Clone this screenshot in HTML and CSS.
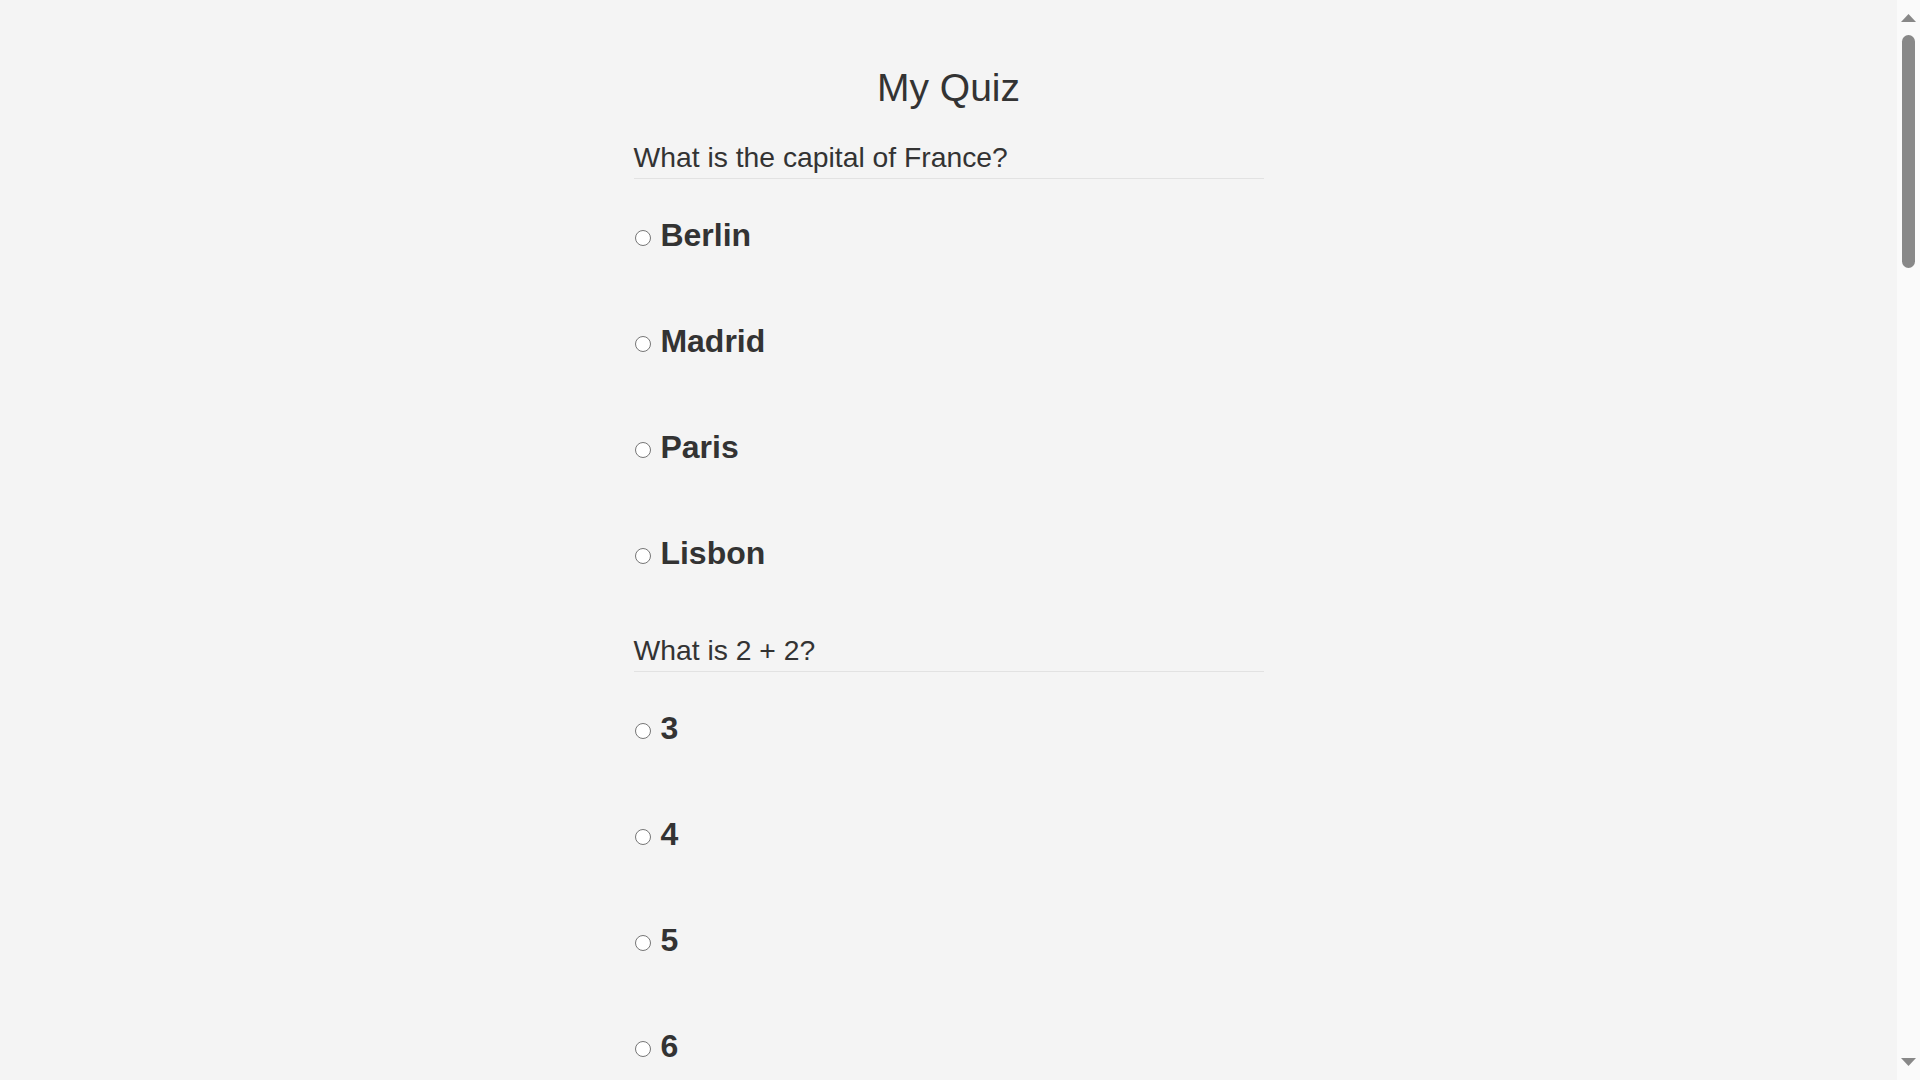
FILE: index.html
```html
<!DOCTYPE html>
<html lang="en">
<head>
<meta charset="utf-8">
<title>My Quiz</title>
<link rel="stylesheet" href="styles.css">
</head>
<body>
<div class="page">
  <main class="quiz">
    <h1 class="quiz-title">My Quiz</h1>

    <section class="question">
      <h2 class="question-text">What is the capital of France?</h2>
      <div class="options">
        <label class="option"><input type="radio" name="q1" class="radio"> Berlin</label>
        <label class="option"><input type="radio" name="q1" class="radio"> Madrid</label>
        <label class="option"><input type="radio" name="q1" class="radio"> Paris</label>
        <label class="option"><input type="radio" name="q1" class="radio"> Lisbon</label>
      </div>
    </section>

    <section class="question">
      <h2 class="question-text">What is 2 + 2?</h2>
      <div class="options">
        <label class="option"><input type="radio" name="q2" class="radio"> 3</label>
        <label class="option"><input type="radio" name="q2" class="radio"> 4</label>
        <label class="option"><input type="radio" name="q2" class="radio"> 5</label>
        <label class="option"><input type="radio" name="q2" class="radio"> 6</label>
      </div>
    </section>
  </main>
</div>
<div class="scrollbar" aria-hidden="true">
  <svg class="scroll-arrow" width="23" height="30" viewBox="0 0 23 30"><polygon points="4,22 11.5,14 19,22" fill="#888888"/></svg>
  <div class="scroll-thumb"></div>
  <svg class="scroll-arrow scroll-arrow-down" width="23" height="30" viewBox="0 0 23 30"><polygon points="4,8 19,8 11.5,16" fill="#888888"/></svg>
</div>
</body>
</html>
```

FILE: styles.css
```css
html, body {
  margin: 0;
  padding: 0;
}

body {
  display: flex;
  height: 100vh;
  overflow: hidden;
  background: #f4f4f4;
  color: #333333;
  font-family: "Liberation Sans", Arial, sans-serif;
}

.page {
  flex: 1;
  min-width: 0;
}

.quiz {
  width: 630px;
  margin: 0 auto;
  padding-top: 65px;
}

.quiz-title {
  margin: 0 0 30px;
  font-size: 39px;
  line-height: 46px;
  font-weight: normal;
  text-align: center;
}

.question + .question {
  margin-top: 62px;
}

.question-text {
  margin: 0;
  font-size: 28.3px;
  line-height: 32px;
  font-weight: normal;
  padding-bottom: 5px;
  border-bottom: 1px solid #e2e2e2;
}

.options {
  margin-top: 38px;
  display: flex;
  flex-direction: column;
  gap: 69px;
}

.option {
  display: block;
  font-size: 32px;
  line-height: 37px;
  font-weight: bold;
  white-space: pre;
}

.radio {
  -webkit-appearance: none;
  appearance: none;
  box-sizing: border-box;
  width: 16px;
  height: 16px;
  margin: 0 1px 0 1px;
  border: 1.5px solid #767676;
  border-radius: 50%;
  background: #ffffff;
  vertical-align: baseline;
}

/* scrollbar */
.scrollbar {
  width: 23px;
  flex: none;
  background: #fafafa;
  display: flex;
  flex-direction: column;
  align-items: center;
}

.scroll-arrow {
  display: block;
  flex: none;
}

.scroll-thumb {
  width: 13px;
  height: 233px;
  margin-top: 5px;
  border-radius: 7px;
  background: #888888;
}

.scroll-arrow-down {
  margin-top: auto;
}
```
